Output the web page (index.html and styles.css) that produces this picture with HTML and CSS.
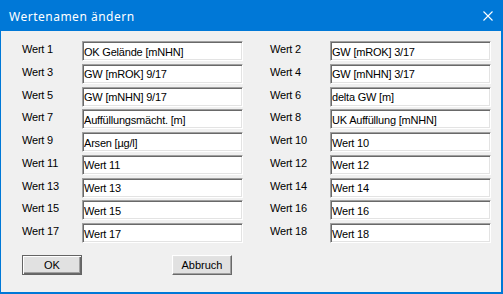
FILE: index.html
```html
<!DOCTYPE html>
<html lang="de">
<head>
    <meta charset="UTF-8">
    <title>Wertenamen ändern</title>
    <link rel="stylesheet" href="styles.css">
</head>
<body>
    <div class="window">
        <div class="title-bar">
            <span class="title">Wertenamen ändern</span>
            <svg class="close" width="10" height="10" viewBox="0 0 10 10">
                <path d="M0.5 0.5 L9.5 9.5 M9.5 0.5 L0.5 9.5" stroke="#fff" stroke-width="1.1" fill="none"/>
            </svg>
        </div>

        <div class="client">
            <div class="fields">
                <label>Wert 1</label><input type="text" value="OK Gelände [mNHN]"><span></span>
                <label>Wert 2</label><input type="text" value="GW [mROK] 3/17">
                <label>Wert 3</label><input type="text" value="GW [mROK] 9/17"><span></span>
                <label>Wert 4</label><input type="text" value="GW [mNHN] 3/17">
                <label>Wert 5</label><input type="text" value="GW [mNHN] 9/17"><span></span>
                <label>Wert 6</label><input type="text" value="delta GW [m]">
                <label>Wert 7</label><input type="text" value="Auffüllungsmächt. [m]"><span></span>
                <label>Wert 8</label><input type="text" value="UK Auffüllung [mNHN]">
                <label>Wert 9</label><input type="text" value="Arsen [µg/l]"><span></span>
                <label>Wert 10</label><input type="text" value="Wert 10">
                <label>Wert 11</label><input type="text" value="Wert 11"><span></span>
                <label>Wert 12</label><input type="text" value="Wert 12">
                <label>Wert 13</label><input type="text" value="Wert 13"><span></span>
                <label>Wert 14</label><input type="text" value="Wert 14">
                <label>Wert 15</label><input type="text" value="Wert 15"><span></span>
                <label>Wert 16</label><input type="text" value="Wert 16">
                <label>Wert 17</label><input type="text" value="Wert 17"><span></span>
                <label>Wert 18</label><input type="text" value="Wert 18">
            </div>

            <div class="buttons">
                <button class="btn default">OK</button>
                <button class="btn">Abbruch</button>
            </div>
        </div>
    </div>
</body>
</html>
```

FILE: styles.css
```css
body {
    margin: 0;
    padding: 0;
    font-family: "Liberation Sans", Arial, sans-serif;
    background: #f0f0f0;
}

.window {
    width: 503px;
    height: 294px;
    box-sizing: border-box;
    border-left: 1px solid #0078d7;
    border-right: 2px solid #0078d7;
    border-bottom: 2px solid #0078d7;
    background: #f0f0f0;
    display: flex;
    flex-direction: column;
}

.title-bar {
    height: 31px;
    background: #0078d7;
    display: flex;
    align-items: center;
    justify-content: space-between;
    padding-left: 8px;
    padding-right: 8px;
}

.title {
    color: #fff;
    font-family: "Noto Sans", "Liberation Sans", sans-serif;
    font-size: 12px;
    letter-spacing: 0.5px;
    padding-top: 1px;
}

.close {
    display: block;
    margin-top: 1px;
}

.client {
    padding: 10px 0 0 21px;
}

.fields {
    display: grid;
    grid-template-columns: 60px 161px 27px 60px 161px;
    grid-auto-rows: 20px;
    row-gap: 2.75px;
}

.fields label {
    font-size: 11px;
    line-height: 13px;
    padding-top: 2px;
    color: #000;
    letter-spacing: -0.2px;
}

.fields input {
    box-sizing: border-box;
    height: 20px;
    margin: 0;
    padding: 1px 1px 0 1px;
    font-family: "Liberation Sans", Arial, sans-serif;
    font-size: 11px;
    letter-spacing: -0.2px;
    color: #000;
    background: #fff;
    border-style: solid;
    border-width: 1px;
    border-color: #a0a0a0 #fff #fff #a0a0a0;
    box-shadow: inset 1px 1px 0 #696969, inset -1px -1px 0 #e3e3e3;
    outline: none;
}

.buttons {
    display: flex;
    gap: 90px;
    margin-top: 12px;
}

.btn {
    box-sizing: border-box;
    width: 60px;
    height: 20px;
    margin: 0;
    padding: 0;
    font-family: "Liberation Sans", Arial, sans-serif;
    font-size: 11px;
    color: #000;
    background: #e1e1e1;
    border-style: solid;
    border-width: 1px;
    border-color: #fff #696969 #696969 #fff;
    box-shadow: inset -1px -1px 0 #a0a0a0, inset 1px 1px 0 #e3e3e3;
}

.btn.default {
    border-color: #646464;
    box-shadow: inset 1px 1px 0 #fff, inset -1px -1px 0 #696969, inset -2px -2px 0 #a0a0a0;
}
```
